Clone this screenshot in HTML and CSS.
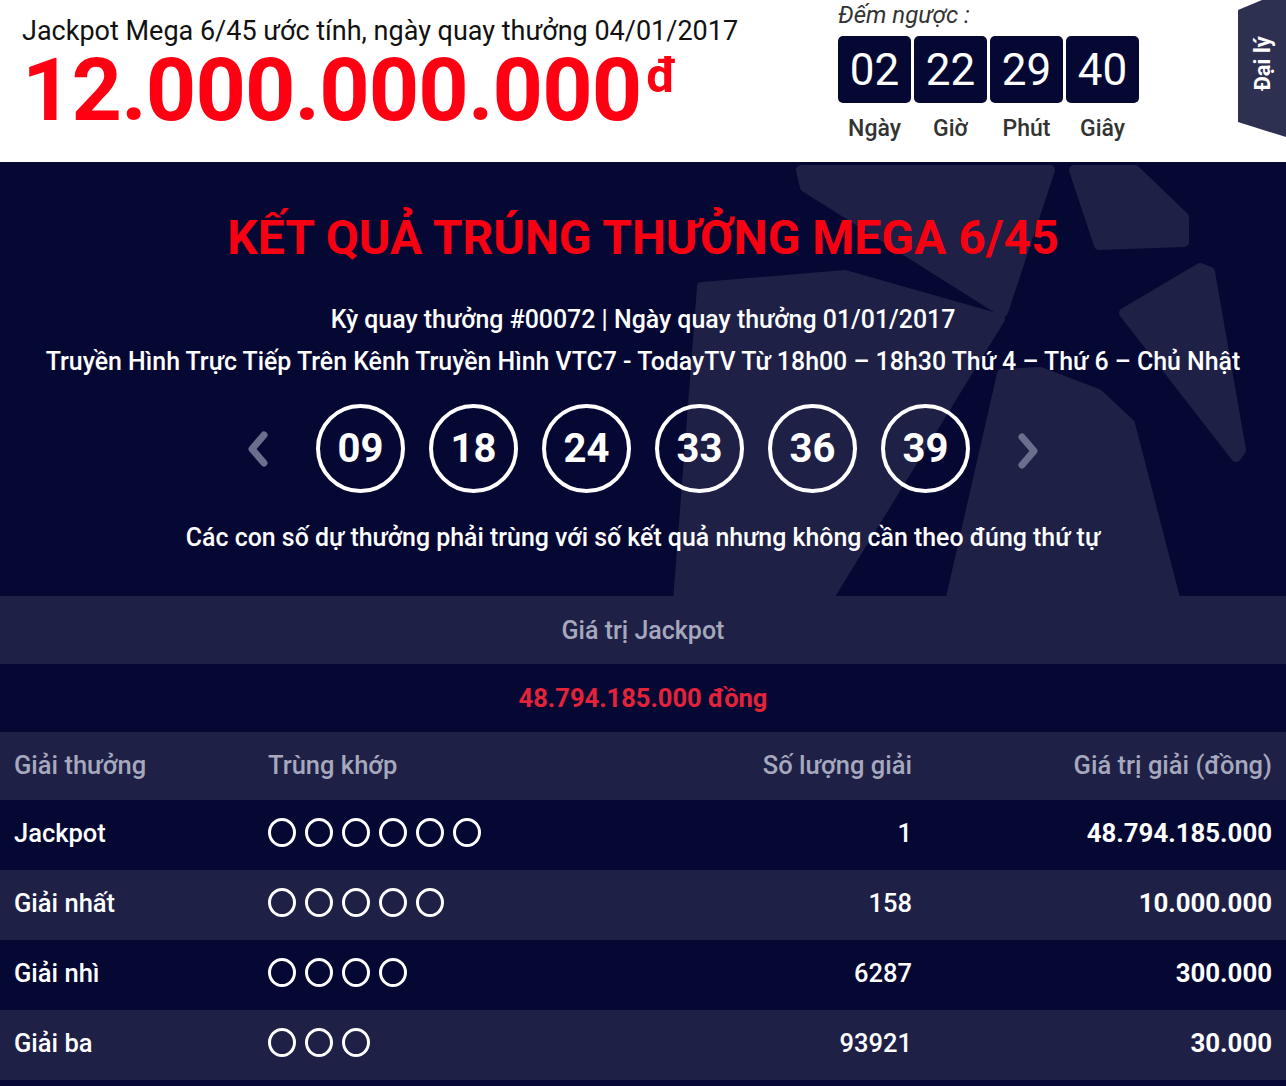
FILE: index.html
```html
<!DOCTYPE html>
<html lang="vi">
<head>
<meta charset="utf-8">
<title>Kết quả Mega 6/45</title>
<link rel="stylesheet" href="styles.css">
</head>
<body>
<div class="page">
  <header class="top">
    <div class="jackpot">
      <div class="jp-label">Jackpot Mega 6/45 ước tính, ngày quay thưởng 04/01/2017</div>
      <div class="jp-amount">12.000.000.000<span class="cur">đ</span></div>
    </div>
    <div class="countdown">
      <div class="cd-title">Đếm ngược :</div>
      <div class="cd-units">
        <div class="cd-unit"><div class="cd-box">02</div><div class="cd-label">Ngày</div></div>
        <div class="cd-unit"><div class="cd-box">22</div><div class="cd-label">Giờ</div></div>
        <div class="cd-unit"><div class="cd-box">29</div><div class="cd-label">Phút</div></div>
        <div class="cd-unit"><div class="cd-box">40</div><div class="cd-label">Giây</div></div>
      </div>
    </div>
    <a class="agent-tab" href="#"><span>Đại lý</span></a>
  </header>

  <section class="hero">
    <svg class="hero-bg" viewBox="0 0 1286 434" width="1286" height="434" aria-hidden="true">
      <g fill="#1e2046" stroke="#1e2046" stroke-width="10" stroke-linejoin="round">
        <polygon points="801,8 1050,8 1003,150 805,25"/>
        <polygon points="1074,8 1135,8 1184,55 1184,80 1099,83"/>
        <polygon points="1124,151 1200,106 1210,110 1241,288 1236,295"/>
        <polygon points="1002,212 1040,210 1098,232 1130,262 1176,440 950,440"/>
        <polygon points="702,125 845,113 1000,157 826,440 678,440"/>
      </g>
    </svg>
    <div class="hero-content">
      <h1 class="hero-title">KẾT QUẢ TRÚNG THƯỞNG MEGA 6/45</h1>
      <p class="hero-sub">Kỳ quay thưởng #00072 | Ngày quay thưởng 01/01/2017</p>
      <p class="hero-sub">Truyền Hình Trực Tiếp Trên Kênh Truyền Hình VTC7 - TodayTV Từ 18h00 – 18h30 Thứ 4 – Thứ 6 – Chủ Nhật</p>
      <div class="balls">
        <svg class="chev" viewBox="0 0 24 36" width="24" height="36"><polyline points="18,4 6,18 18,32" fill="none" stroke="#6c6e8e" stroke-width="7" stroke-linecap="round" stroke-linejoin="round"/></svg>
        <div class="ball-list">
          <span class="ball">09</span>
          <span class="ball">18</span>
          <span class="ball">24</span>
          <span class="ball">33</span>
          <span class="ball">36</span>
          <span class="ball">39</span>
        </div>
        <svg class="chev chev-right" viewBox="0 0 24 36" width="24" height="36"><polyline points="6,4 18,18 6,32" fill="none" stroke="#6c6e8e" stroke-width="7" stroke-linecap="round" stroke-linejoin="round"/></svg>
      </div>
      <p class="hero-sub hero-note">Các con số dự thưởng phải trùng với số kết quả nhưng không cần theo đúng thứ tự</p>
    </div>
  </section>

  <div class="jp-head">Giá trị Jackpot</div>
  <div class="jp-value">48.794.185.000 đồng</div>

  <div class="prizes">
    <div class="prow prow-head">
      <div>Giải thưởng</div>
      <div>Trùng khớp</div>
      <div class="num">Số lượng giải</div>
      <div class="num">Giá trị giải (đồng)</div>
    </div>
    <div class="prow">
      <div>Jackpot</div>
      <div class="dots"><i></i><i></i><i></i><i></i><i></i><i></i></div>
      <div class="num">1</div>
      <div class="num val">48.794.185.000</div>
    </div>
    <div class="prow alt">
      <div>Giải nhất</div>
      <div class="dots"><i></i><i></i><i></i><i></i><i></i></div>
      <div class="num">158</div>
      <div class="num val">10.000.000</div>
    </div>
    <div class="prow">
      <div>Giải nhì</div>
      <div class="dots"><i></i><i></i><i></i><i></i></div>
      <div class="num">6287</div>
      <div class="num val">300.000</div>
    </div>
    <div class="prow alt">
      <div>Giải ba</div>
      <div class="dots"><i></i><i></i><i></i></div>
      <div class="num">93921</div>
      <div class="num val">30.000</div>
    </div>
    <div class="prow tail"></div>
  </div>
</div>
</body>
</html>
```
FILE: styles.css
```css
* { box-sizing: border-box; }
html, body { margin: 0; padding: 0; }
body {
  font-family: Roboto, "Noto Sans", "Liberation Sans", sans-serif;
  background: #050833;
  color: #fff;
}
.page { width: 1286px; }

/* ---------- header ---------- */
.top {
  position: relative;
  height: 162px;
  background: #fff;
  display: flex;
  padding-left: 22px;
}
.jackpot { flex: 0 0 816px; padding-top: 16px; }
.jp-label {
  font-size: 27px;
  line-height: 30px;
  color: #111;
}
.jp-amount {
  font-size: 88px;
  line-height: 88px;
  font-weight: 700;
  color: #fe0011;
  letter-spacing: -0.9px;
}
.cur {
  font-size: 49px;
  line-height: 0;
  vertical-align: 28px;
  margin-left: 5px;
  letter-spacing: 0;
}
.cd-title {
  font-size: 24px;
  line-height: 30px;
  font-style: italic;
  color: #333;
}
.cd-units { display: flex; gap: 3px; margin-top: 6px; }
.cd-unit { width: 73px; display: flex; flex-direction: column; align-items: center; }
.cd-box {
  width: 73px;
  height: 67px;
  background: #050833;
  border-radius: 5px;
  color: #fff;
  font-size: 44px;
  display: flex;
  align-items: center;
  justify-content: center;
}
.cd-label {
  margin-top: 11px;
  font-size: 23px;
  line-height: 30px;
  font-weight: 500;
  color: #333;
}
.agent-tab {
  position: absolute;
  right: 0;
  top: 0;
  width: 48px;
  height: 137px;
  background: #2e3052;
  clip-path: polygon(0 10px, 24px 0, 100% 0, 100% 100%, 0 122px);
  display: flex;
  align-items: center;
  justify-content: center;
  text-decoration: none;
  padding-bottom: 10px;
}
.agent-tab span {
  transform: rotate(-90deg);
  color: #fff;
  font-weight: 700;
  font-size: 22px;
  white-space: nowrap;
}

/* ---------- hero ---------- */
.hero {
  position: relative;
  background: #050833;
  overflow: hidden;
}
.hero-bg { position: absolute; left: 0; top: 0; }
.hero-content {
  position: relative;
  display: flex;
  flex-direction: column;
  align-items: center;
  padding: 48px 0 37px;
  text-align: center;
}
.hero-title {
  margin: 0;
  font-size: 48px;
  line-height: 56px;
  font-weight: 700;
  color: #f80012;
}
.hero-sub {
  margin: 0;
  font-size: 24.9px;
  line-height: 42px;
  font-weight: 500;
  color: #fff;
}
.hero-title + .hero-sub { margin-top: 33px; }
.balls {
  display: flex;
  align-items: center;
  margin-top: 21px;
}
.chev { display: block; }
.chev-right { margin-top: 4px; }
.ball-list { display: flex; gap: 24px; margin: 0 46px; }
.ball {
  width: 89px;
  height: 89px;
  border: 4px solid #fff;
  border-radius: 50%;
  display: flex;
  align-items: center;
  justify-content: center;
  font-size: 40px;
  font-weight: 700;
  color: #fff;
}
.hero-note { margin-top: 24px; }

/* ---------- jackpot value ---------- */
.jp-head {
  height: 68px;
  background: #1e2046;
  color: #a6a8bd;
  font-size: 25px;
  font-weight: 500;
  display: flex;
  align-items: center;
  justify-content: center;
}
.jp-value {
  height: 68px;
  background: #050833;
  color: #e4233b;
  font-size: 25.5px;
  font-weight: 700;
  display: flex;
  align-items: center;
  justify-content: center;
}

/* ---------- prize table ---------- */
.prow {
  display: grid;
  grid-template-columns: 254px 1fr 200px 360px;
  align-items: center;
  height: 70px;
  padding: 0 14px 5px;
  font-size: 25.5px;
  font-weight: 500;
  background: #050833;
}
.prow.alt { background: #1e2046; }
.prow-head {
  height: 68px;
  padding-bottom: 2px;
  background: #1e2046;
  color: #a6a8bd;
}
.num { text-align: right; }
.val { font-weight: 700; font-size: 25.8px; }
.dots { display: flex; gap: 9px; }
.dots i {
  display: block;
  width: 28px;
  height: 29px;
  border: 3px solid #fff;
  border-radius: 50%;
}
.prow.tail { height: 6px; padding: 0; }
```
